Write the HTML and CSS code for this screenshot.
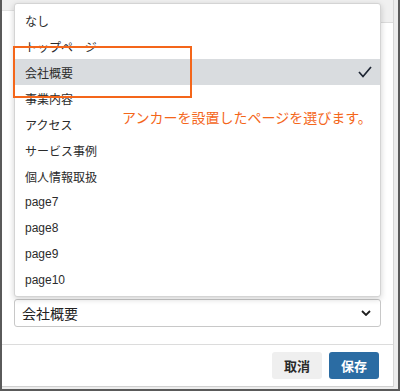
FILE: index.html
```html
<!DOCTYPE html>
<html lang="ja">
<head>
    <meta charset="UTF-8">
    <meta name="viewport" content="width=device-width, initial-scale=1.0">
    <title>アンカー設定</title>
    <link rel="stylesheet" href="styles.css">
</head>
<body>
    <div class="frame">
        <div class="modal">
            <!-- strip behind the list -->
            <div class="modal-top">
                <div class="modal-top-edge"></div>
            </div>

            <!-- field -->
            <div class="modal-body">
                <div class="select-box">
                    <span class="select-value">会社概要</span>
                    <svg class="chevron" width="10" height="6" viewBox="0 0 10 6">
                        <polyline points="1,1 5,5 9,1" fill="none" stroke="#1e1e1e" stroke-width="1.8"/>
                    </svg>
                </div>
            </div>

            <!-- footer buttons -->
            <div class="modal-footer">
                <button class="btn btn-cancel">取消</button>
                <button class="btn btn-save">保存</button>
            </div>
        </div>

        <!-- open dropdown list -->
        <ul class="option-list">
            <li class="option">なし</li>
            <li class="option">トップページ</li>
            <li class="option selected">
                会社概要
                <svg class="check" width="14" height="12" viewBox="0 0 14 12">
                    <polyline points="1,6 5,10.5 13,1" fill="none" stroke="#1d2533" stroke-width="1.7"/>
                </svg>
            </li>
            <li class="option">事業内容</li>
            <li class="option">アクセス</li>
            <li class="option">サービス事例</li>
            <li class="option">個人情報取扱</li>
            <li class="option">page7</li>
            <li class="option">page8</li>
            <li class="option">page9</li>
            <li class="option">page10</li>
        </ul>

        <!-- annotation -->
        <div class="note-box"></div>
        <div class="note-text">アンカーを設置したページを選びます。</div>
    </div>
</body>
</html>
```

FILE: styles.css
```css
body {
    margin: 0;
    padding: 0;
    font-family: "Liberation Sans", "Noto Sans CJK JP", sans-serif;
    background-color: #fff;
}

.frame {
    position: relative;
    width: 400px;
    height: 391px;
    box-sizing: border-box;
    border-left: 2px solid #5a5a5a;
    border-right: 2px solid #5a5a5a;
    border-bottom: 2px solid #5a5a5a;
    background-color: #ececec;
    overflow: hidden;
}

.modal {
    display: flex;
    flex-direction: column;
    height: 387px;
    margin-right: 4px;
    background-color: #fff;
    border-right: 1px solid #d6d6d6;
    border-bottom: 1px solid #d0d0d0;
    box-sizing: border-box;
}

.modal-top {
    display: flex;
    justify-content: flex-end;
    height: 10px;
    background-color: #f0f0f0;
    border-bottom: 1px solid #e2e2e2;
}

.modal-top-edge {
    width: 12px;
    height: 22px;
    border-bottom: 1px solid #dcdcdc;
    background-color: #f0f0f0;
}

/* field area */
.modal-body {
    flex: 1;
    display: flex;
    flex-direction: column;
    justify-content: flex-end;
    padding: 0 12px 17px 12px;
    border-bottom: 1px solid #dcdcdc;
}

.select-box {
    display: flex;
    align-items: center;
    justify-content: space-between;
    height: 28px;
    padding: 0 9px 0 7px;
    border: 1px solid #c8c8c8;
    border-radius: 3px;
    box-sizing: border-box;
    font-size: 14px;
    color: #222;
}

.chevron {
    display: block;
}

/* footer */
.modal-footer {
    display: flex;
    justify-content: flex-end;
    gap: 7px;
    padding: 7px 14px 7px 0;
}

.btn {
    width: 50px;
    height: 27px;
    border: none;
    border-radius: 3px;
    font-family: "Liberation Sans", "Noto Sans CJK JP", sans-serif;
    font-size: 13px;
    font-weight: bold;
    padding: 0;
}

.btn-cancel {
    background-color: #efefef;
    color: #2a2a2a;
}

.btn-save {
    background-color: #2b6ca3;
    color: #fff;
}

/* open dropdown */
.option-list {
    position: absolute;
    left: 12px;
    top: 3px;
    width: 367px;
    margin: 0;
    padding: 3px 0;
    list-style: none;
    background-color: #fff;
    border: 1px solid #d4d4d4;
    border-radius: 3px;
    box-shadow: 0 2px 6px rgba(0, 0, 0, 0.18);
    box-sizing: border-box;
}

.option {
    display: flex;
    align-items: center;
    justify-content: space-between;
    height: 26px;
    padding: 0 8px 0 10px;
    font-size: 12px;
    color: #2b2b2b;
}

.option.selected {
    background-color: #d9dcdf;
}

.check {
    display: block;
}

/* annotation */
.note-box {
    position: absolute;
    left: 11px;
    top: 46px;
    width: 179px;
    height: 52px;
    border: 2.5px solid #f4661a;
    box-sizing: border-box;
}

.note-text {
    position: absolute;
    left: 120px;
    top: 109px;
    font-size: 14px;
    line-height: 18px;
    color: #f4661a;
    white-space: nowrap;
}
```
